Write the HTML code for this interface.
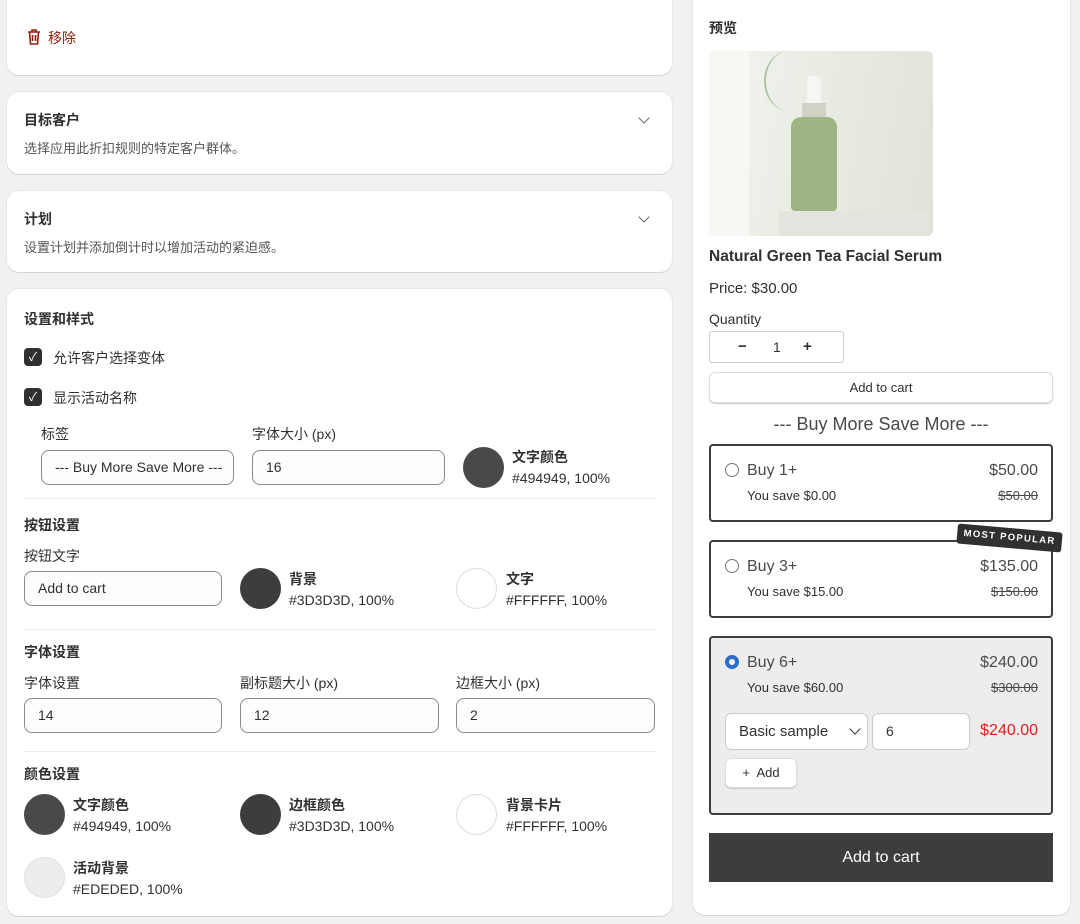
<!DOCTYPE html>
<html><head><meta charset="utf-8"><style>
*{box-sizing:border-box;margin:0;padding:0}
body{width:1080px;height:924px;background:#f1f1f1;font-family:"Liberation Sans","Noto Sans CJK SC",sans-serif;color:#303030;position:relative;overflow:hidden;font-size:14px}
.a{position:absolute}
.card{position:absolute;background:#fff;border-radius:12px;box-shadow:0 1px 0 #d4d4d4,0 0 0 1px #e6e6e6}
.h{font-weight:700;font-size:14px;color:#303030}
.sub{font-size:13px;color:#555}
.inp{position:absolute;height:35px;border:1px solid #8a8a8a;border-radius:8px;background:#fdfdfd;padding:0 13px;line-height:33px;font-size:14px;color:#303030;overflow:hidden;white-space:nowrap}
.sw{position:absolute;width:41px;height:41px;border-radius:50%}
.cb{position:absolute;width:18px;height:18px;background:#303030;border-radius:4px;color:#fff;font-size:12px;text-align:center;line-height:18px}
.hr{position:absolute;left:24px;width:632px;height:1px;background:#ebebeb}
.chev{position:absolute;width:8px;height:8px;border-right:1.5px solid #666;border-bottom:1.5px solid #666;transform:rotate(45deg)}
.tier{position:absolute;left:709px;width:344px;border:2px solid #3d3d3d;border-radius:4px}
.rad{position:absolute;width:14px;height:14px;border:1px solid #777;border-radius:50%;background:#fff}
.s{text-decoration:line-through;font-size:13px;color:#494949}
.r{position:absolute;right:42px;text-align:right}
</style></head><body>
<div class="card" style="left:7px;top:-12px;width:665px;height:87px"></div>
<svg class="a" style="left:26px;top:28px" width="16" height="18" viewBox="0 0 16 18"><path d="M2 4h12M6 4V2h4v2M3.5 4l1 12h7l1-12M6.5 7v6M9.5 7v6" fill="none" stroke="#8e1f0b" stroke-width="1.6"/></svg>
<div class="a" style="left:48px;top:28px;color:#8e1f0b;font-size:14px">移除</div>

<div class="card" style="left:7px;top:92px;width:665px;height:82px"></div>
<div class="a h" style="left:24px;top:110px">目标客户</div>
<div class="a sub" style="left:24px;top:138px">选择应用此折扣规则的特定客户群体。</div>
<div class="chev" style="left:640px;top:114px"></div>

<div class="card" style="left:7px;top:191px;width:665px;height:81px"></div>
<div class="a h" style="left:24px;top:209px">计划</div>
<div class="a sub" style="left:24px;top:237px">设置计划并添加倒计时以增加活动的紧迫感。</div>
<div class="chev" style="left:640px;top:213px"></div>

<div class="card" style="left:7px;top:289px;width:665px;height:627px"></div>
<div class="a h" style="left:24px;top:309px">设置和样式</div>
<div class="cb" style="left:24px;top:348px">✓</div><div class="a" style="left:53px;top:348px">允许客户选择变体</div>
<div class="cb" style="left:24px;top:388px">✓</div><div class="a" style="left:53px;top:388px">显示活动名称</div>
<div class="a" style="left:41px;top:424px">标签</div>
<div class="a" style="left:252px;top:424px">字体大小 (px)</div>
<div class="inp" style="left:41px;top:450px;width:193px">--- Buy More Save More ---</div>
<div class="inp" style="left:252px;top:450px;width:193px">16</div>
<div class="sw" style="left:463px;top:447px;background:#494949"></div>
<div class="a h" style="left:512px;top:447px">文字颜色</div><div class="a" style="left:512px;top:470px">#494949, 100%</div>
<div class="hr" style="top:498px"></div>
<div class="a h" style="left:24px;top:515px">按钮设置</div>
<div class="a" style="left:24px;top:546px">按钮文字</div>
<div class="inp" style="left:24px;top:571px;width:198px">Add to cart</div>
<div class="sw" style="left:240px;top:568px;background:#3d3d3d"></div>
<div class="a h" style="left:289px;top:569px">背景</div><div class="a" style="left:289px;top:592px">#3D3D3D, 100%</div>
<div class="sw" style="left:456px;top:568px;background:#fff;border:1px solid #ddd"></div>
<div class="a h" style="left:506px;top:569px">文字</div><div class="a" style="left:506px;top:592px">#FFFFFF, 100%</div>
<div class="hr" style="top:629px"></div>
<div class="a h" style="left:24px;top:642px">字体设置</div>
<div class="a" style="left:24px;top:673px">字体设置</div>
<div class="a" style="left:240px;top:673px">副标题大小 (px)</div>
<div class="a" style="left:456px;top:673px">边框大小 (px)</div>
<div class="inp" style="left:24px;top:698px;width:198px">14</div>
<div class="inp" style="left:240px;top:698px;width:199px">12</div>
<div class="inp" style="left:456px;top:698px;width:199px">2</div>
<div class="hr" style="top:751px"></div>
<div class="a h" style="left:24px;top:764px">颜色设置</div>
<div class="sw" style="left:24px;top:794px;background:#494949"></div>
<div class="a h" style="left:73px;top:795px">文字颜色</div><div class="a" style="left:73px;top:818px">#494949, 100%</div>
<div class="sw" style="left:240px;top:794px;background:#3d3d3d"></div>
<div class="a h" style="left:289px;top:795px">边框颜色</div><div class="a" style="left:289px;top:818px">#3D3D3D, 100%</div>
<div class="sw" style="left:456px;top:794px;background:#fff;border:1px solid #ddd"></div>
<div class="a h" style="left:506px;top:795px">背景卡片</div><div class="a" style="left:506px;top:818px">#FFFFFF, 100%</div>
<div class="sw" style="left:24px;top:857px;background:#ededed;border:1px solid #e0e0e0"></div>
<div class="a h" style="left:73px;top:858px">活动背景</div><div class="a" style="left:73px;top:881px">#EDEDED, 100%</div>

<div class="card" style="left:693px;top:-12px;width:377px;height:927px"></div>
<div class="a h" style="left:709px;top:18px">预览</div>
<div class="a" style="left:709px;top:51px;width:224px;height:185px;border-radius:6px;overflow:hidden;background:linear-gradient(100deg,#f4f6f1 0%,#e9ede4 40%,#dfe3d9 100%)">
 <div class="a" style="left:0;top:0;width:40px;height:185px;background:#f7f8f4"></div>
 <div class="a" style="left:70px;top:160px;width:150px;height:30px;background:#e3e6de"></div>
 <div class="a" style="left:98px;top:25px;width:14px;height:30px;background:#f6f6f3;border-radius:6px 6px 2px 2px"></div>
 <div class="a" style="left:93px;top:52px;width:24px;height:16px;background:#cfd3c6"></div>
 <div class="a" style="left:82px;top:66px;width:46px;height:94px;background:#9fb484;border-radius:10px 10px 4px 4px"></div>
 <div class="a" style="left:55px;top:0;width:50px;height:60px;border-left:2px solid #6e8f52;border-radius:50%;opacity:.5"></div>
</div>
<div class="a h" style="left:709px;top:248px;font-size:15.5px">Natural Green Tea Facial Serum</div>
<div class="a" style="left:709px;top:280px;font-size:15px">Price: $30.00</div>
<div class="a" style="left:709px;top:311px">Quantity</div>
<div class="a" style="left:709px;top:331px;width:135px;height:32px;border:1px solid #ccc;border-radius:3px"></div>
<div class="a" style="left:738px;top:338px;font-weight:700;font-size:15px">−</div>
<div class="a" style="left:773px;top:339px">1</div>
<div class="a" style="left:803px;top:338px;font-weight:700;font-size:15px">+</div>
<div class="a" style="left:709px;top:372px;width:344px;height:31px;border:1px solid #ddd;border-radius:6px;box-shadow:0 1px 1px #ccc;text-align:center;line-height:29px;font-size:13px">Add to cart</div>
<div class="a" style="left:709px;top:414px;width:344px;text-align:center;font-size:18px;color:#494949">--- Buy More Save More ---</div>

<div class="tier" style="top:444px;height:78px"></div>
<div class="rad" style="left:725px;top:463px"></div>
<div class="a" style="left:747px;top:462px;font-size:16px;color:#494949">Buy 1+</div>
<div class="r" style="top:462px;font-size:16px;color:#494949">$50.00</div>
<div class="a" style="left:747px;top:488px;font-size:13px">You save $0.00</div>
<div class="r s" style="top:488px">$50.00</div>

<div class="tier" style="top:540px;height:78px"></div>
<div class="a" style="left:957px;top:528px;width:105px;height:20px;background:#303030;color:#fff;font-size:9.5px;font-weight:700;letter-spacing:1.3px;text-align:center;line-height:20px;border-radius:3px;transform:rotate(5deg)">MOST POPULAR</div>
<div class="rad" style="left:725px;top:559px"></div>
<div class="a" style="left:747px;top:558px;font-size:16px;color:#494949">Buy 3+</div>
<div class="r" style="top:558px;font-size:16px;color:#494949">$135.00</div>
<div class="a" style="left:747px;top:584px;font-size:13px">You save $15.00</div>
<div class="r s" style="top:584px">$150.00</div>

<div class="tier" style="top:636px;height:179px;background:#ededed"></div>
<div class="rad" style="left:725px;top:655px;border:4px solid #2c6ecb"></div>
<div class="a" style="left:747px;top:654px;font-size:16px;color:#494949">Buy 6+</div>
<div class="r" style="top:654px;font-size:16px;color:#494949">$240.00</div>
<div class="a" style="left:747px;top:680px;font-size:13px">You save $60.00</div>
<div class="r s" style="top:680px">$300.00</div>
<div class="a" style="left:725px;top:713px;width:143px;height:37px;border:1px solid #ccc;border-radius:6px;background:#fff;padding-left:13px;line-height:35px;font-size:15px">Basic sample</div>
<div class="chev" style="left:851px;top:725px;border-color:#303030"></div>
<div class="a" style="left:872px;top:713px;width:98px;height:37px;border:1px solid #ccc;border-radius:6px;background:#fff;padding-left:13px;line-height:35px;font-size:14px">6</div>
<div class="r" style="top:722px;font-size:16px;color:#e51c1c">$240.00</div>
<div class="a" style="left:725px;top:758px;width:72px;height:30px;border:1px solid #ddd;border-radius:6px;background:#fff;box-shadow:0 1px 1px #ccc;text-align:center;line-height:28px;font-size:13px">+&nbsp; Add</div>
<div class="a" style="left:709px;top:833px;width:344px;height:49px;background:#3d3d3d;color:#fff;text-align:center;line-height:49px;font-size:16px">Add to cart</div>
</body></html>
